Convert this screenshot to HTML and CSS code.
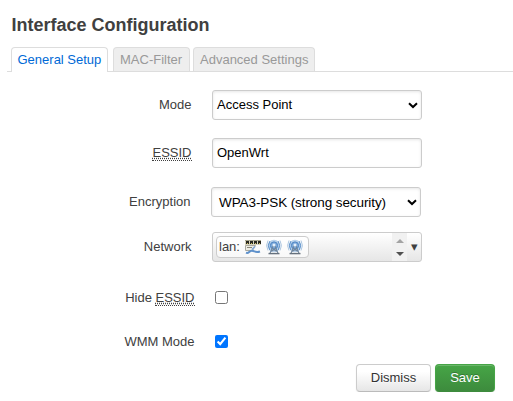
FILE: index.html
```
<!DOCTYPE html>
<html lang="en">
<head>
<meta charset="utf-8">
<title>Interface Configuration</title>
<link rel="stylesheet" href="styles.css">
</head>
<body>
<svg width="0" height="0" class="defs" aria-hidden="true">
  <symbol id="wifi" viewBox="0 0 16 16">
    <circle cx="8" cy="7" r="6.3" fill="#b7d1ec"/>
    <circle cx="8" cy="6.5" r="3.6" fill="#7eabdc" stroke="#4c83c2"/>
    <path d="M3.8 2.2Q.9 6.5 3.8 11M12.2 2.2Q15.1 6.5 12.2 11" fill="none" stroke="#5b8fc9" stroke-width="1"/>
    <path d="M2 1.5Q-.9 6.5 2 11.5M14 1.5Q16.9 6.5 14 11.5" fill="none" stroke="#a3bfdc" stroke-width=".9"/>
    <path d="M7.5 6L4 14.3M8.5 6L12 14.3M6.3 9.5l4.3 2.8M9.7 9.5l-4.3 2.8" fill="none" stroke="#71869d" stroke-width="1.1"/>
    <path d="M2.5 14.6h11" stroke="#66717d" stroke-width="1.4"/>
    <circle cx="8" cy="6" r="1.5" fill="#e4effb"/>
  </symbol>
</svg>
<main>
  <h1>Interface Configuration</h1>
  <nav class="tabs">
    <a class="tab active">General Setup</a>
    <a class="tab">MAC-Filter</a>
    <a class="tab last">Advanced Settings</a>
  </nav>
  <form>
    <div class="row mode">
      <label>Mode</label>
      <div class="field">Access Point<svg class="chevron" viewBox="0 0 10 7"><path d="M1 1.2L5 5L9 1.2"/></svg></div>
    </div>
    <div class="row essid">
      <label><abbr>ESSID</abbr></label>
      <div class="field">OpenWrt</div>
    </div>
    <div class="row encryption">
      <label>Encryption</label>
      <div class="field"><span class="cipher">WPA3-PSK (strong security)</span><svg class="chevron" viewBox="0 0 10 7"><path d="M1 1.2L5 5L9 1.2"/></svg></div>
    </div>
    <div class="row network">
      <label>Network</label>
      <div class="field dropdown">
        <span class="badge">lan:
          <svg viewBox="0 0 16 16">
            <path d="M0 1h16v5H0z" fill="#d9d5bd"/>
            <path d="M0 1.5h16" stroke="#a9a68f"/>
            <path d="M1 2h3v3H1zM5 2h3v3H5zM9 2h3v3H9zM13 2h3v3h-3z" fill="#29281f"/>
            <path d="M1 4.5h15" stroke="#c9b657" stroke-dasharray="1 3" stroke-dashoffset="-1"/>
            <path d="M.5 6.5h10l-3 5h-7z" fill="#eeede4" stroke="#aaa99f"/>
            <path d="M2 8.5h5" stroke="#8a8779"/>
            <path d="M10 7.5L7 10.5" stroke="#7da6d6" stroke-width="1.5"/>
            <path d="M1 13.7c3 1.3 3-2.2 6-2s3 2.4 8 .8" fill="none" stroke="#5f91cb" stroke-width="2"/>
          </svg>
          <svg viewBox="0 0 16 16"><use href="#wifi"/></svg>
          <svg viewBox="0 0 16 16"><use href="#wifi"/></svg>
        </span>
        <span class="scroll"><i class="up"></i><i class="down"></i></span>
        <span class="open">▾</span>
      </div>
    </div>
    <div class="row check hide">
      <label>Hide <abbr>ESSID</abbr></label>
      <input type="checkbox">
    </div>
    <div class="row check wmm">
      <label>WMM Mode</label>
      <input type="checkbox" checked>
    </div>
    <div class="actions">
      <button type="button">Dismiss</button>
      <button type="button" class="save">Save</button>
    </div>
  </form>
</main>
</body>
</html>
```
FILE: styles.css
```
* { box-sizing: border-box; }
body {
  margin: 0;
  background: #fff;
  color: #404040;
  font: 13px/18px "Liberation Sans", Arial, sans-serif;
  overflow: hidden;
}
.defs { display: block; }
h1 {
  margin: 0;
  padding: 7px 0 0 11.5px;
  height: 47px;
  font-size: 18px;
  line-height: 36px;
}
.tabs {
  display: flex;
  gap: 4px;
  height: 25px;
  margin-left: 7px;
  padding-left: 4px;
  border-bottom: 1px solid #ddd;
}
.tab {
  width: 77px;
  height: 24px;
  padding: 3px 0 0 6px;
  border: 1px solid #ddd;
  border-bottom: 0;
  border-radius: 4px 4px 0 0;
  background: #eee;
  color: #999;
  white-space: nowrap;
}
.tab.active {
  width: 97px;
  height: 25px;
  margin-right: 1px;
  padding-left: 5.5px;
  background: #fff;
  color: #0069d6;
}
.tab.last { width: 122px; margin-left: -1px; }
.row {
  display: grid;
  grid-template-columns: 191.5px 210px;
  column-gap: 20.5px;
  align-items: center;
  height: 30px;
}
label { text-align: right; }
abbr { border-bottom: 1px dotted #404040; text-decoration: underline dotted; }
.mode { margin-top: 18px; }
.essid { margin-top: 18px; }
.encryption { margin-top: 19px; grid-template-columns: 190.5px 210px; }
.network { margin-top: 15px; }
.hide { margin-top: 20px; }
.wmm { margin-top: 14px; }
.check { grid-template-columns: 194.5px 13px; }
.mode label, .essid label, .network label { padding-bottom: 1px; }
.encryption label { padding-bottom: 1px; }
.check label { padding-top: 1px; }
input { width: 13px; height: 13px; margin: 0; }
.field {
  display: flex;
  align-items: center;
  justify-content: space-between;
  height: 30px;
  padding: 0 3px 0 4px;
  border: 1px solid #ccc;
  border-radius: 3px;
  background: #fff;
  box-shadow: inset 0 1px 3px rgba(0,0,0,.1);
  color: #000;
  white-space: nowrap;
}
.cipher { padding: 1px 0 0 3px; font-size: 13.5px; letter-spacing: -.09px; }
.chevron { width: 10px; height: 7px; fill: none; stroke: #000; stroke-width: 2; }
.dropdown {
  padding: 0 3px;
  background: linear-gradient(#fff, #e6e6e6);
  box-shadow: none;
  color: #404040;
}
.badge {
  display: flex;
  align-items: center;
  gap: 5px;
  width: 93px;
  height: 22px;
  padding-left: 2px;
  border: 1px solid #ccc;
  border-radius: 4px;
  background: linear-gradient(#fff, #f8f8f8);
}
.badge svg { width: 16px; height: 16px; flex: none; }
.scroll {
  display: flex;
  flex-direction: column;
  align-items: center;
  justify-content: space-between;
  width: 15px;
  height: 28px;
  margin-left: auto;
  padding: 6px 0 5px;
  background: #f1f1f1;
}
.scroll i { border: 4px solid transparent; }
.scroll .up { border-top: 0; border-bottom-color: #a3a3a3; }
.scroll .down { border-bottom: 0; border-top-color: #505050; }
.open { width: 11px; padding-left: 3.5px; }
.actions {
  display: flex;
  justify-content: flex-end;
  gap: 4px;
  margin: 8px 18px 0 0;
}
button {
  width: 75px;
  height: 28px;
  padding: 0 0 1px;
  border: 1px solid #ccc;
  border-bottom-color: #bbb;
  border-radius: 4px;
  background: linear-gradient(#fff, #fff 25%, #e6e6e6);
  box-shadow: inset 0 1px 0 rgba(255,255,255,.2), 0 1px 2px rgba(0,0,0,.05);
  color: #333;
  font: inherit;
  text-shadow: 0 1px 1px rgba(255,255,255,.75);
}
.save {
  width: 60px;
  border-color: #46a546 #46a546 #3d8b3d;
  background: linear-gradient(#46a546, #3d8b3d);
  color: #fff;
  text-shadow: 0 -1px 0 rgba(0,0,0,.25);
}
```
